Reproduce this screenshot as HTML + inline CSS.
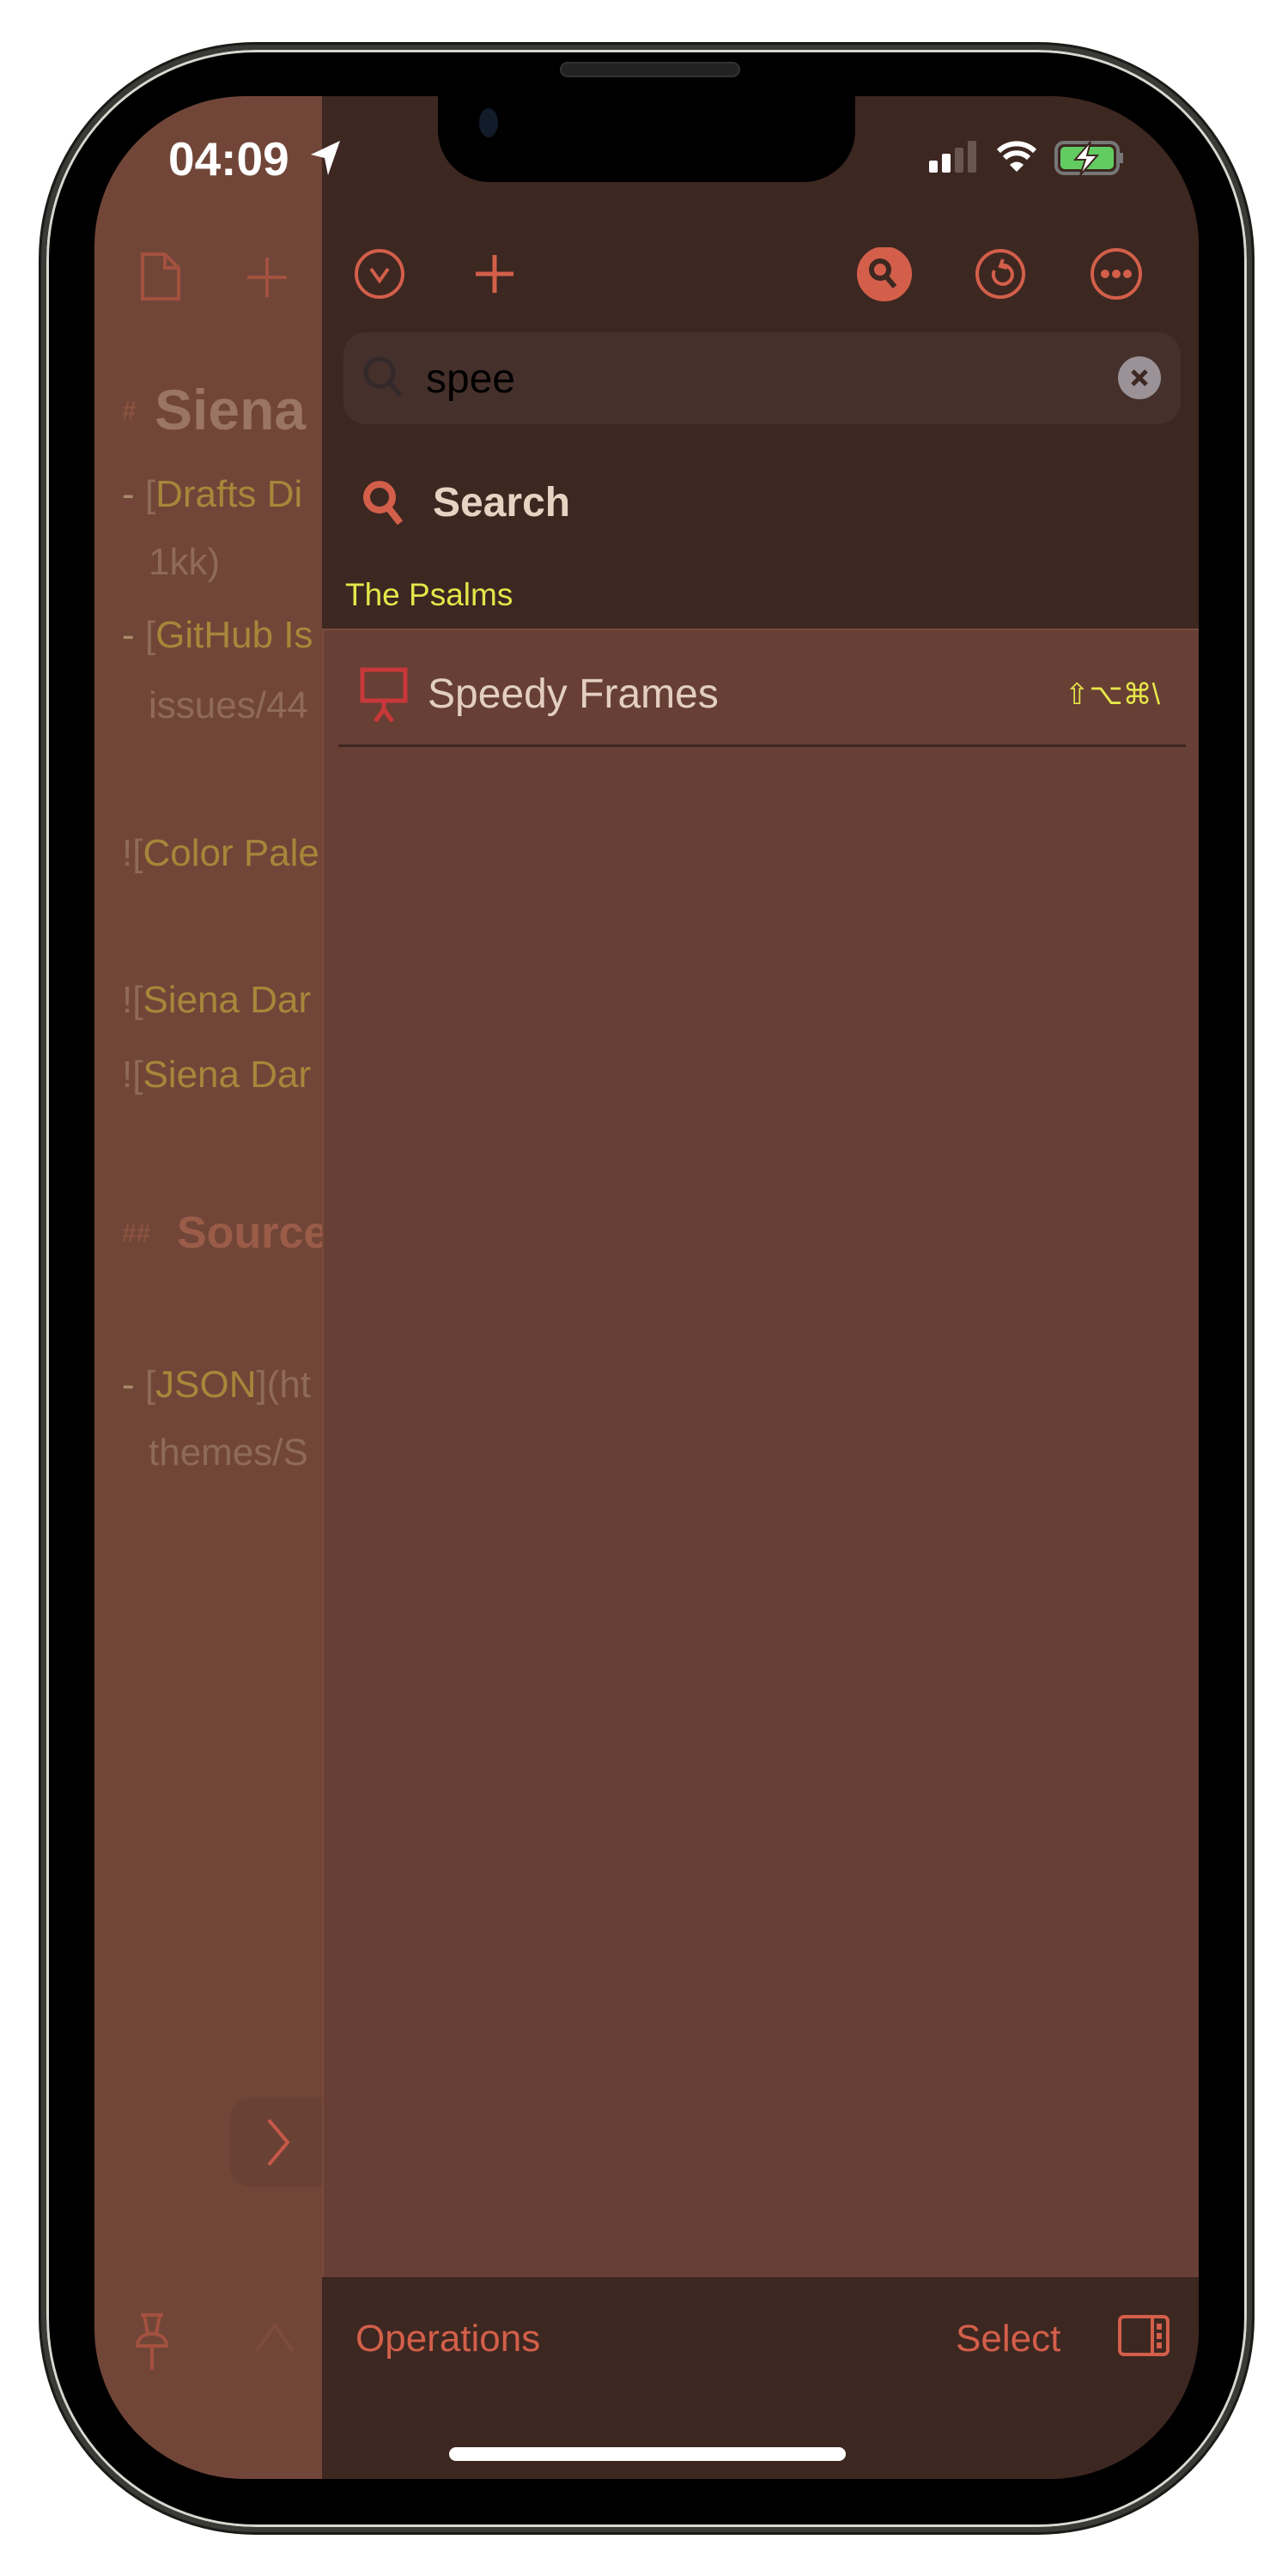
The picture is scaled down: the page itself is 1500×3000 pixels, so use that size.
<!DOCTYPE html>
<html><head><meta charset="utf-8"><style>
*{margin:0;padding:0;box-sizing:border-box}
body{width:1500px;height:3000px;background:#fff;position:relative;overflow:hidden;font-family:"Liberation Sans",sans-serif}
.abs{position:absolute}
#frame{left:48px;top:52px;width:1410px;height:2897px;border-radius:250px;background:#000;border:6px solid #3a3a36;box-shadow:0 0 0 3px #1a1a18, inset 0 0 0 3px #d8d8d0}
#screen{left:110px;top:112px;width:1286px;height:2775px;border-radius:175px;overflow:hidden;background:#714638}
.t{position:absolute;white-space:nowrap;font-size:44px;line-height:1}
.y{color:#a8863a}.g{color:#8f6a5a}.d{color:#a88a6a}
</style></head><body>
<div id="frame" class="abs"></div>
<div id="screen" class="abs">
  <svg class="abs" style="left:48px;top:180px" width="60" height="60" viewBox="0 0 60 60" fill="none" stroke="#a3513f" stroke-width="4"><path d="M8 4h26l16 16v36H8z M34 4v16h16"/></svg>
  <svg class="abs" style="left:176px;top:186px" width="50" height="50" fill="none" stroke="#a3513f" stroke-width="4"><path d="M25 2v46M2 25h46"/></svg>
  <div class="t" style="left:32px;top:352px;font-size:30px;color:#8a5240;font-weight:bold">#</div>
  <div class="t" style="left:70px;top:332px;font-size:66px;font-weight:bold;color:#9a7464">Siena</div>
  <div class="t" style="left:32px;top:442px"><span class="d">- </span><span class="g">[</span><span class="y">Drafts Di</span></div>
  <div class="t g" style="left:63px;top:521px">1kk)</div>
  <div class="t" style="left:32px;top:606px"><span class="d">- </span><span class="g">[</span><span class="y">GitHub Is</span></div>
  <div class="t g" style="left:63px;top:688px">issues/44</div>
  <div class="t" style="left:32px;top:860px"><span class="g">![</span><span class="y">Color Pale</span></div>
  <div class="t" style="left:32px;top:1031px"><span class="g">![</span><span class="y">Siena Dar</span></div>
  <div class="t" style="left:32px;top:1118px"><span class="g">![</span><span class="y">Siena Dar</span></div>
  <div class="t" style="left:32px;top:1310px;font-size:30px;color:#8a5240;font-weight:bold">##</div>
  <div class="t" style="left:96px;top:1298px;font-size:52px;font-weight:bold;color:#9a5c48">Source</div>
  <div class="t" style="left:32px;top:1479px"><span class="d">- </span><span class="g">[</span><span class="y">JSON</span><span class="g">](ht</span></div>
  <div class="t g" style="left:63px;top:1558px">themes/S</div>
  <div class="abs" style="left:157px;top:2331px;width:110px;height:104px;background:#6a4235;border-radius:26px 0 0 26px"></div>
  <svg class="abs" style="left:195px;top:2353px" width="40" height="60" fill="none" stroke="#c8584a" stroke-width="4"><path d="M8 4l22 26-22 26"/></svg>
  <svg class="abs" style="left:42px;top:2580px" width="50" height="70" fill="none" stroke="#a3513f" stroke-width="4"><path d="M12 4h26M16 4l4 22M34 4l-4 22M8 40c0-10 8-14 17-14s17 4 17 14z M25 40v28"/></svg>
  <svg class="abs" style="left:185px;top:2590px" width="50" height="40" fill="none" stroke="#7d4c3e" stroke-width="4"><path d="M4 36L25 6l21 30"/></svg>

  <div class="abs" style="left:265px;top:0;width:1023px;height:2788px;background:#673f34;border-left:2px solid #7a4a3b"></div>
  <div class="abs" style="left:265px;top:0;width:1023px;height:621px;background:#3d2721"></div>
  <div class="abs" style="left:265px;top:620px;width:1023px;height:2px;background:#7a4a3b"></div>
  <div class="abs" style="left:265px;top:2540px;width:1023px;height:250px;background:#3d2721"></div>

  <div class="abs" style="left:400px;top:-10px;width:486px;height:110px;background:#000;border-radius:0 0 60px 60px"></div>
  <div class="abs" style="left:448px;top:14px;width:22px;height:34px;border-radius:50%;background:#111b2a"></div>

  <div class="t" style="left:86px;top:46px;font-size:55px;color:#fff;font-weight:bold">04:09</div>
  <svg class="abs" style="left:250px;top:50px" width="40" height="44"><path d="M36 2L2 18l16 4 4 20z" fill="#fff"/></svg>
  <svg class="abs" style="left:972px;top:52px" width="60" height="40"><rect x="0" y="23" width="10" height="14" rx="2" fill="#fff"/><rect x="15" y="15" width="10" height="22" rx="2" fill="#fff"/><rect x="30" y="8" width="10" height="29" rx="2" fill="#6a5650"/><rect x="45" y="0" width="10" height="37" rx="2" fill="#6a5650"/></svg>
  <svg class="abs" style="left:1049px;top:50px" width="50" height="40" fill="none" stroke="#fff" stroke-width="6"><path d="M4 14a30 30 0 0 1 42 0M11 22a20 20 0 0 1 28 0"/><path d="M17 30a11 11 0 0 1 16 0L25 38z" fill="#fff" stroke="none"/></svg>
  <svg class="abs" style="left:1118px;top:52px" width="84" height="40"><rect x="2" y="2" width="72" height="36" rx="9" fill="none" stroke="#777" stroke-width="4"/><rect x="7" y="7" width="62" height="26" rx="5" fill="#62cc62"/><path d="M78 14v12" stroke="#777" stroke-width="4"/><path d="M42 1L24 22h12l-6 18 20-23H38z" fill="#fff" stroke="#3d2721" stroke-width="2"/></svg>

  <svg class="abs" style="left:300px;top:176px" width="1000" height="66" fill="none" stroke="#d35f4a" stroke-width="4">
    <circle cx="32" cy="31" r="27"/><path d="M22 25l10 14 10-14"/>
    <path d="M166 9v44M144 31h44" stroke-width="5"/>
    <circle cx="620" cy="31" r="30" fill="#d35f4a"/><circle cx="615" cy="26" r="10" stroke="#3d2721" stroke-width="6"/><path d="M622 34l10 12" stroke="#3d2721" stroke-width="6"/>
    <circle cx="755" cy="31" r="27"/><path d="M748 27a11 11 0 1 0 8-6M758 14l-3 8 8 2"/>
    <circle cx="890" cy="31" r="28"/><g fill="#d35f4a" stroke="none"><circle cx="877" cy="31" r="5"/><circle cx="890" cy="31" r="5"/><circle cx="903" cy="31" r="5"/></g>
  </svg>

  <div class="abs" style="left:290px;top:275px;width:975px;height:107px;border-radius:26px;background:#45302b"></div>
  <svg class="abs" style="left:312px;top:302px" width="50" height="56" fill="none" stroke="#33292a" stroke-width="5"><circle cx="20" cy="20" r="16"/><path d="M32 32l12 14"/></svg>
  <div class="t" style="left:386px;top:306px;font-size:48px;color:#000">spee</div>
  <svg class="abs" style="left:1192px;top:303px" width="50" height="50"><circle cx="25" cy="25" r="25" fill="#9a9297"/><path d="M17 17l16 16M33 17L17 33" stroke="#3d2721" stroke-width="5"/></svg>

  <svg class="abs" style="left:310px;top:446px" width="54" height="56" fill="none" stroke="#d35f4a" stroke-width="8"><circle cx="22" cy="21" r="15"/><path d="M32 33l14 18"/></svg>
  <div class="t" style="left:394px;top:450px;font-size:48px;font-weight:bold;color:#e8d3c3">Search</div>
  <div class="t" style="left:292px;top:562px;font-size:37px;color:#e6e64a">The Psalms</div>

  <svg class="abs" style="left:308px;top:664px" width="58" height="70" fill="none" stroke="#c8383a" stroke-width="5"><rect x="4" y="4" width="50" height="36"/><path d="M29 40v14M29 50l-10 14M29 50l10 14"/></svg>
  <div class="t" style="left:388px;top:673px;font-size:48px;color:#e3cfc2">Speedy Frames</div>
  <div class="t" style="left:1130px;top:680px;font-size:34px;color:#e6e64a">⇧⌥⌘\</div>
  <div class="abs" style="left:284px;top:755px;width:987px;height:3px;background:#3d2721"></div>

  <div class="t" style="left:304px;top:2590px;font-size:44px;color:#d35f4a">Operations</div>
  <div class="t" style="left:1003px;top:2590px;font-size:44px;color:#d35f4a">Select</div>
  <svg class="abs" style="left:1192px;top:2584px" width="62" height="50" fill="none" stroke="#d35f4a" stroke-width="4"><rect x="2" y="2" width="56" height="44" rx="5"/><path d="M40 2v44"/><g fill="#d35f4a" stroke="none"><rect x="45" y="10" width="6" height="7"/><rect x="45" y="21" width="6" height="7"/><rect x="45" y="32" width="6" height="7"/></g></svg>
  <div class="abs" style="left:413px;top:2738px;width:462px;height:16px;border-radius:8px;background:#fff"></div>
</div>
<div class="abs" style="left:652px;top:72px;width:210px;height:18px;border-radius:9px;background:#222;border:2px solid #333"></div>
</body></html>
